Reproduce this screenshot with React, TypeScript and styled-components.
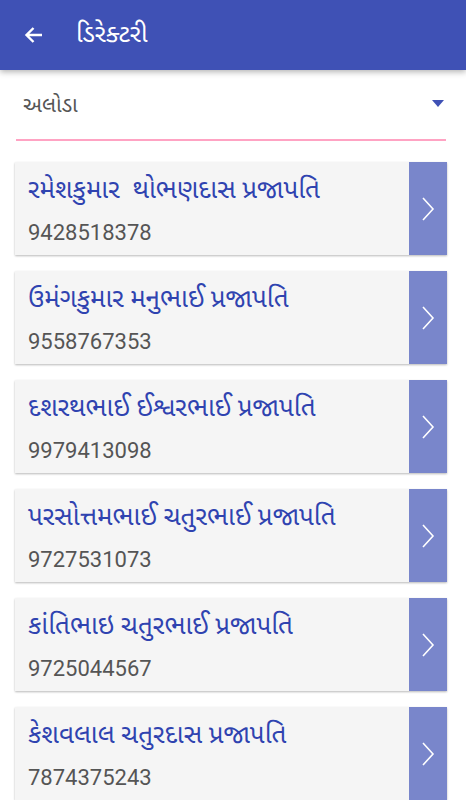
import styled, { createGlobalStyle } from "styled-components";

const GlobalStyle = createGlobalStyle`
  html, body {
    margin: 0;
    padding: 0;
    background: #ffffff;
    font-family: Roboto, "Noto Sans", "Noto Sans Gujarati", sans-serif;
  }
`;

const Screen = styled.div`
  width: 466px;
  height: 800px;
  overflow: hidden;
  display: flex;
  flex-direction: column;
  background: #ffffff;
`;

const AppBar = styled.header`
  height: 70px;
  flex-shrink: 0;
  background: #3f51b5;
  display: flex;
  align-items: center;
  padding-left: 22px;
  gap: 30px;
  box-shadow: 0 2px 6px rgba(0, 0, 0, 0.3);
  position: relative;
  z-index: 1;
`;

const BackButton = styled.button`
  width: 24px;
  height: 24px;
  padding: 0;
  border: none;
  background: none;
  display: flex;
  align-items: center;
  justify-content: center;
`;

const Title = styled.h1`
  margin: 0;
  font-size: 25px;
  font-weight: 400;
  color: #ffffff;
`;

const Spinner = styled.div`
  margin: 0 20px 0 16px;
  height: 70px;
  border-bottom: 2px solid #ffa3c3;
  display: flex;
  align-items: center;
  justify-content: space-between;
  padding: 0 2px 0 7px;
`;

const SpinnerText = styled.span`
  font-size: 21.5px;
  color: #555555;
  margin-top: 4px;
`;

const Caret = styled.span`
  width: 0;
  height: 0;
  border-left: 6px solid transparent;
  border-right: 6px solid transparent;
  border-top: 7px solid #3f51b5;
  margin-top: -2px;
`;

const List = styled.div`
  display: flex;
  flex-direction: column;
  gap: 16px;
  padding: 21px 19px 0 15px;
`;

const Card = styled.div`
  height: 93px;
  flex-shrink: 0;
  display: flex;
  background: #f5f5f5;
  box-shadow: 0 1px 2px rgba(0, 0, 0, 0.28);
`;

const Info = styled.div`
  flex: 1;
  display: flex;
  flex-direction: column;
  padding: 10px 0 0 13px;
  gap: 12px;
`;

const Name = styled.div`
  font-size: 26px;
  color: #2f43b0;
  line-height: 34px;
  white-space: pre;
`;

const Phone = styled.div`
  font-size: 22px;
  color: #555555;
  line-height: 30px;
`;

const Arrow = styled.div`
  width: 38px;
  background: #7986cb;
  display: flex;
  align-items: center;
  justify-content: center;
`;

const people = [
  { name: "રમેશકુમાર  થોભણદાસ પ્રજાપતિ", phone: "9428518378" },
  { name: "ઉમંગકુમાર મનુભાઈ પ્રજાપતિ", phone: "9558767353" },
  { name: "દશરથભાઈ ઈશ્વરભાઈ પ્રજાપતિ", phone: "9979413098" },
  { name: "પરસોત્તમભાઈ ચતુરભાઈ પ્રજાપતિ", phone: "9727531073" },
  { name: "કાંતિભાઇ ચતુરભાઈ પ્રજાપતિ", phone: "9725044567" },
  { name: "કેશવલાલ ચતુરદાસ પ્રજાપતિ", phone: "7874375243" },
];

export default function App() {
  return (
    <>
      <GlobalStyle />
      <Screen>
        <AppBar>
          <BackButton aria-label="Back">
            <svg width="24" height="24" viewBox="0 0 24 24" fill="none">
              <path d="M20 12H5M11.5 5L4.5 12l7 7" stroke="#ffffff" strokeWidth="2.4" />
            </svg>
          </BackButton>
          <Title>ડિરેક્ટરી</Title>
        </AppBar>

        <Spinner>
          <SpinnerText>અલોડા</SpinnerText>
          <Caret />
        </Spinner>

        <List>
          {people.map((p) => (
            <Card key={p.phone}>
              <Info>
                <Name>{p.name}</Name>
                <Phone>{p.phone}</Phone>
              </Info>
              <Arrow>
                <svg width="14" height="26" viewBox="0 0 14 26" fill="none">
                  <path d="M2 2l10 11L2 24" stroke="#ffffff" strokeWidth="1.6" />
                </svg>
              </Arrow>
            </Card>
          ))}
        </List>
      </Screen>
    </>
  );
}
